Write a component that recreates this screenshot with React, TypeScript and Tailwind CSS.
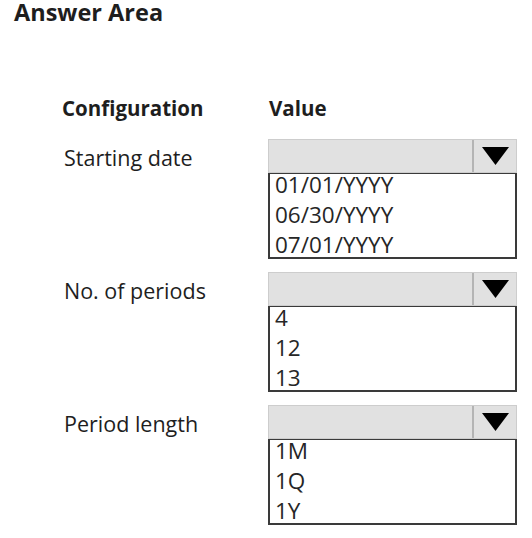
import React from 'react';

interface Row {
  label: string;
  options: string[];
}

const rows: Row[] = [
  { label: 'Starting date', options: ['01/01/YYYY', '06/30/YYYY', '07/01/YYYY'] },
  { label: 'No. of periods', options: ['4', '12', '13'] },
  { label: 'Period length', options: ['1M', '1Q', '1Y'] },
];

const Arrow: React.FC = () => (
  <svg width="27" height="18" viewBox="0 0 27 18">
    <polygon points="0,0 27,0 13.5,18" fill="#000" />
  </svg>
);

const DropDown: React.FC<{ options: string[] }> = ({ options }) => (
  <div className="flex flex-col w-[249px]">
    <div className="flex h-[34px] bg-[#e1e1e1] border border-[#cdcdcd]">
      <div className="flex-1"></div>
      <div className="w-[44px] border-l-2 border-[#b4b4b4] flex items-center justify-center">
        <Arrow />
      </div>
    </div>
    <div className="h-[86px] border-2 border-t-[1.5px] border-[#3a3a3a] overflow-hidden pl-[5px]">
      <div className="-mt-[4px] text-[22.5px] leading-[30px] text-[#262626]">
        {options.map((o) => (
          <div key={o}>{o}</div>
        ))}
      </div>
    </div>
  </div>
);

export default function App() {
  return (
    <div className="w-[532px] h-[538px] bg-white text-[#1e1e1e]" style={{ fontFamily: '"Open Sans", sans-serif' }}>
      <div className="pl-[14px] text-[23.5px] leading-[24px] font-bold">Answer Area</div>
      <div className="mt-[72px] pl-[62px] grid grid-cols-[206px_249px] text-[20.5px] leading-[24px] font-bold">
        <div>Configuration</div>
        <div className="pl-[1px]">Value</div>
      </div>
      <div className="mt-[19px] pl-[62px] flex flex-col gap-[13px]">
        {rows.map((r) => (
          <div key={r.label} className="grid grid-cols-[206px_249px]">
            <div className="h-[34px] flex items-center pt-[3px] pl-[2px] text-[21.5px] leading-[24px]">{r.label}</div>
            <DropDown options={r.options} />
          </div>
        ))}
      </div>
    </div>
  );
}
